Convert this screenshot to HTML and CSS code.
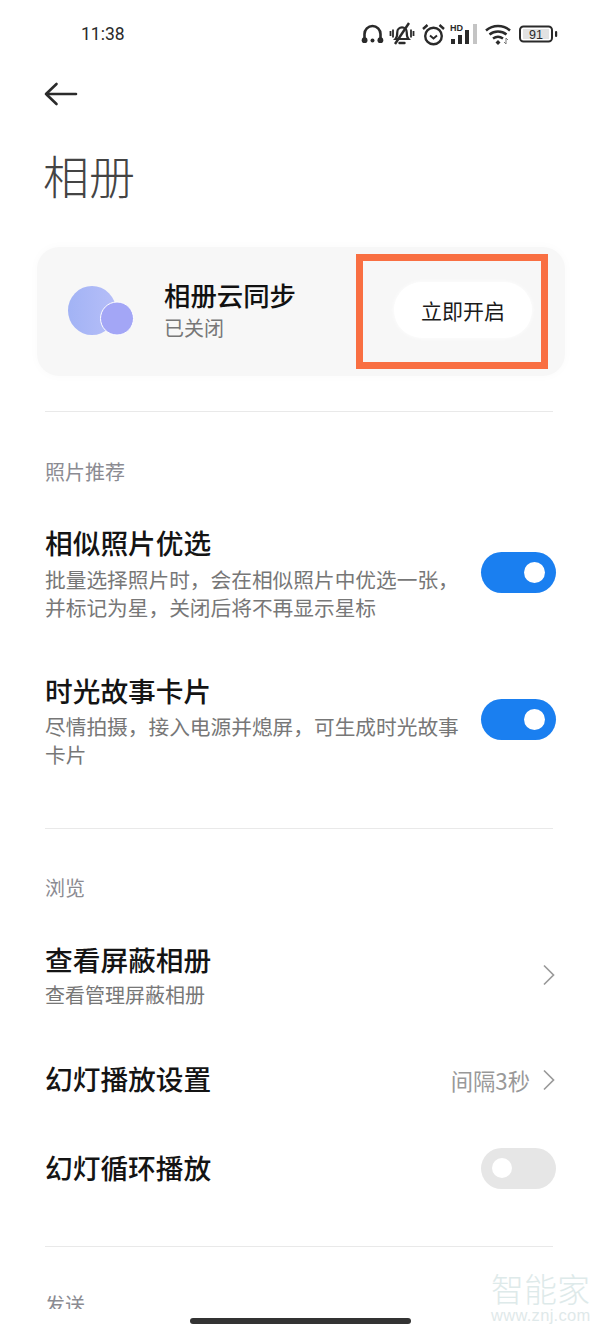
FILE: index.html
```html
<!DOCTYPE html>
<html lang="zh-CN">
<head>
<meta charset="utf-8">
<title>相册</title>
<link rel="stylesheet" href="styles.css">
</head>
<body>
<div class="screen">
  <header class="status">
    <span class="time">11:38</span>
    <div class="status-icons">
      <svg class="ic-head" width="23" height="22" viewBox="0 0 23 22"><path d="M3.5 17V11a8 8 0 0 1 16 0v6" fill="none" stroke="#2a2a2a" stroke-width="2.6"/><circle cx="3.6" cy="17.2" r="2.9" fill="#2a2a2a"/><circle cx="19.4" cy="17.2" r="2.9" fill="#2a2a2a"/><circle cx="11.5" cy="17.6" r="2" fill="#2a2a2a"/></svg>
      <svg class="ic-bell" width="26" height="24" viewBox="0 0 26 24"><path d="M6.500 17c1.800-2 1.800-4.500 1.800-7a4.700 4.700 0 0 1 9.400 0c0 2.500 0 5 1.800 7z" fill="none" stroke="#2a2a2a" stroke-width="2.200"/><path d="M10.500 21h5" stroke="#2a2a2a" stroke-width="2.400" stroke-linecap="round"/><path d="M6 22 20 1" stroke="#2a2a2a" stroke-width="2.400"/><path d="M1.500 9v5M4 7.500v8M22 7.500v8M24.500 9v5" stroke="#2a2a2a" stroke-width="1.800"/></svg>
      <svg class="ic-alarm" width="23" height="23" viewBox="0 0 23 23"><circle cx="11.500" cy="13" r="8.300" fill="none" stroke="#2a2a2a" stroke-width="2.400"/><path d="M8 12.500l3.500 3 3.500-3" fill="none" stroke="#2a2a2a" stroke-width="2"/><path d="M1 6l4.500-4M22 6l-4.500-4" stroke="#2a2a2a" stroke-width="2.400"/></svg>
      <svg class="ic-signal" width="29" height="24" viewBox="0 0 29 24"><text x="0" y="8.500" class="hd">HD</text><rect x="1" y="17" width="4" height="5" fill="#2a2a2a"/><rect x="8" y="13" width="4" height="9" fill="#2a2a2a"/><rect x="15" y="8" width="4" height="14" fill="#2a2a2a"/><rect x="23" y="2" width="4" height="20" fill="#c4c4c4"/></svg>
      <svg class="ic-wifi" width="26" height="22" viewBox="0 0 26 22"><path d="M1 7.500c7-6 17-6 24 0M4.500 11.500c5-4 12-4 17 0M8 15.500c3-2.200 7-2.200 10 0" fill="none" stroke="#2a2a2a" stroke-width="2.500"/><path d="M10.500 19.500l2.500-2.500 2.500 2.500-2.500 2.500z" fill="#2a2a2a"/><path d="M21 15v6M19 19l2 2M23 17l-2-2" stroke="#777" stroke-width="1"/></svg>
      <svg class="ic-batt" width="39" height="18" viewBox="0 0 39 18"><rect x="1" y="1.500" width="32" height="15" rx="3.500" fill="#fff" stroke="#2a2a2a" stroke-width="2"/><rect x="4" y="4" width="26" height="10" fill="#e2e2e2"/><text x="17" y="14" class="batt">91</text><rect x="36" y="6" width="2.200" height="6" rx="1" fill="#2a2a2a"/></svg>
    </div>
  </header>

  <nav class="nav">
    <svg width="34" height="24" viewBox="0 0 34 24"><path d="M32 12H2M12.500 2 2 12l10.500 10" fill="none" stroke="#2b2b2b" stroke-width="2.600" stroke-linecap="round" stroke-linejoin="round"/></svg>
  </nav>

  <h1 class="page-title">相册</h1>

  <section class="card">
    <svg class="cloud" width="66" height="50" viewBox="0 0 66 50">
      <defs><linearGradient id="cl" x1="0" x2="1" y1="0" y2="0"><stop offset="0" stop-color="#a2b3f5"/><stop offset="1" stop-color="#b6bef8"/></linearGradient></defs>
      <ellipse cx="24" cy="24.500" rx="24" ry="24.500" fill="url(#cl)"/>
      <circle cx="49" cy="32.500" r="16.500" fill="#a3a6f6" stroke="#fff" stroke-width="1"/>
    </svg>
    <div class="card-text">
      <div class="card-title">相册云同步</div>
      <div class="card-sub">已关闭</div>
    </div>
    <div class="pill">立即开启</div>
    <div class="mark"></div>
  </section>

  <hr class="rule rule-a">

  <div class="label">照片推荐</div>
  <div class="row row-first">
    <div class="row-text">
      <div class="row-title">相似照片优选</div>
      <div class="row-sub">批量选择照片时，会在相似照片中优选一张，<br>并标记为星，关闭后将不再显示星标</div>
    </div>
    <span class="toggle on"></span>
  </div>
  <div class="row row-second">
    <div class="row-text">
      <div class="row-title">时光故事卡片</div>
      <div class="row-sub">尽情拍摄，接入电源并熄屏，可生成时光故事<br>卡片</div>
    </div>
    <span class="toggle on"></span>
  </div>

  <hr class="rule rule-b">

  <div class="label">浏览</div>
  <div class="row row-hidden">
    <div class="row-text">
      <div class="row-title">查看屏蔽相册</div>
      <div class="row-sub">查看管理屏蔽相册</div>
    </div>
    <svg class="chev" width="13" height="22" viewBox="0 0 13 22"><path d="M2 1.500 11.500 11 2 20.500" fill="none" stroke="#9a9a9a" stroke-width="1.700"/></svg>
  </div>
  <div class="row row-slide">
    <div class="row-title">幻灯播放设置</div>
    <span class="value">间隔3秒</span>
    <svg class="chev" width="13" height="22" viewBox="0 0 13 22"><path d="M2 1.500 11.500 11 2 20.500" fill="none" stroke="#9a9a9a" stroke-width="1.700"/></svg>
  </div>
  <div class="row row-loop">
    <div class="row-title">幻灯循环播放</div>
    <span class="toggle off"></span>
  </div>

  <hr class="rule rule-c">

  <div class="label">发送</div>

  <div class="fold"></div>
  <div class="home"></div>
  <div class="watermark">
    <div class="wm-cn">智能家</div>
    <div class="wm-en">www.znj.com</div>
  </div>
</div>
</body>
</html>
```

FILE: styles.css
```css
* { box-sizing: border-box; }
html, body { margin: 0; padding: 0; background: #fff; }
.screen {
  position: relative;
  width: 600px;
  height: 1333px;
  overflow: hidden;
  background: #fff;
  font-family: "Noto Sans CJK SC", "Noto Sans", sans-serif;
  color: #141414;
}
.status {
  height: 68px;
  display: flex;
  align-items: center;
  justify-content: space-between;
  padding: 0 42px 0 81px;
}
.time { font: 400 17.500px/24px "Roboto", "Noto Sans", sans-serif; color: #2a2a2a; }
.status-icons { display: flex; align-items: center; }
.status-icons svg { display: block; flex: none; }
.ic-bell { margin-left: 5px; }
.ic-alarm { margin-left: 7px; }
.ic-signal { margin-left: 5px; }
.ic-wifi { margin-left: 6px; }
.ic-batt { margin-left: 8px; }
.hd { font: 700 9px "Liberation Sans", sans-serif; fill: #2a2a2a; }
.batt { font: 400 12.500px "Liberation Sans", sans-serif; fill: #2a2a2a; text-anchor: middle; }
.nav { height: 68px; padding: 14px 0 0 44px; }
.nav svg { display: block; }
.page-title {
  margin: 0;
  height: 76px;
  padding-left: 43px;
  font-size: 46px;
  line-height: 76px;
  font-weight: 300;
  color: #444;
}
.card {
  position: relative;
  display: flex;
  align-items: center;
  width: 528px;
  height: 129px;
  margin: 35px 0 0 37px;
  padding-left: 31px;
  border-radius: 22px;
  background: #f7f7f7;
  box-shadow: 0 0 10px 1px #fbfbfb;
}
.cloud { flex: none; margin-top: -1px; }
.card-text { margin-left: 30px; margin-top: -4px; }
.card-title { font-size: 26.400px; line-height: 36px; font-weight: 500; color: #111; }
.card-sub { font-size: 20px; line-height: 28px; color: #777; margin-top: 1px; }
.pill {
  width: 138px;
  height: 56px;
  margin-left: 98px;
  margin-top: -3px;
  border-radius: 28px;
  background: #fff;
  box-shadow: 0 0 4px #fff;
  font-size: 21px;
  line-height: 56px;
  text-align: center;
  color: #1a1a1a;
}
.mark {
  position: absolute;
  left: 319px;
  top: 7px;
  width: 192px;
  height: 115px;
  border: 7px solid #f96f42;
}
.rule { height: 1px; margin: 0 47px 0 45px; border: 0; background: #e9e9e9; }
.rule-a { margin-top: 35px; }
.rule-b { margin-top: 60px; }
.rule-c { margin-top: 57px; }
.label {
  margin: 46px 0 0 45px;
  font-size: 20px;
  line-height: 28px;
  color: #8b8b92;
}
.rule-b + .label { margin-top: 45px; }
.row { display: flex; padding: 0 44px 0 45px; }
.row-text { flex: 1; }
.row-title { flex: 1; font-size: 27.700px; line-height: 36px; font-weight: 500; color: #141414; }
.row-sub { margin-top: 3px; font-size: 20.700px; line-height: 28px; color: #777; }
.toggle { position: relative; flex: none; display: block; width: 75px; height: 41px; border-radius: 21px; }
.toggle::after { content: ""; position: absolute; top: 10px; border-radius: 50%; background: #fff; }
.toggle.on { margin-top: 26px; background: #1a7ff0; }
.toggle.on::after { right: 11px; width: 21px; height: 21px; }
.toggle.off { background: #e6e6e6; }
.toggle.off::after { left: 11px; width: 20px; height: 20px; }
.row-first { margin-top: 38px; }
.row-first .row-sub { margin-top: 5px; }
.row-first .toggle { margin-top: 28px; }
.row-second { margin-top: 51px; }
.row-second .row-sub { margin-top: 4px; }
.row-second .toggle { margin-top: 27px; }
.row-hidden { margin-top: 39px; align-items: center; }
.row-hidden .row-sub { margin-top: 4px; font-size: 20px; }
.row-slide { margin-top: 51px; align-items: center; }
.row-slide .value, .row-slide .chev { margin-top: 4px; }
.row-slide .chev { margin-left: 12px; }
.row-loop { margin-top: 52px; align-items: center; }
.row-loop .row-title { margin-top: -4px; }
.chev { flex: none; display: block; margin-left: 13px; margin-right: 1px; }
.value { font-size: 22.300px; line-height: 28px; color: #999; }
.rule-c + .label { margin-top: 44px; }
.fold { position: absolute; left: 0; right: 0; bottom: 0; height: 24px; background: #fff; }
.home { position: absolute; left: 190px; top: 1318px; width: 221px; height: 6px; border-radius: 3px; background: #333; }
.watermark { position: absolute; left: 491px; top: 1271px; width: 100px; color: #deeaea; }
.wm-cn { font-size: 33px; line-height: 34px; font-weight: 300; }
.wm-en { margin-top: 2px; font: 400 16.500px/16px "Liberation Sans", sans-serif; letter-spacing: .3px; color: #dfe9ea; }
```
